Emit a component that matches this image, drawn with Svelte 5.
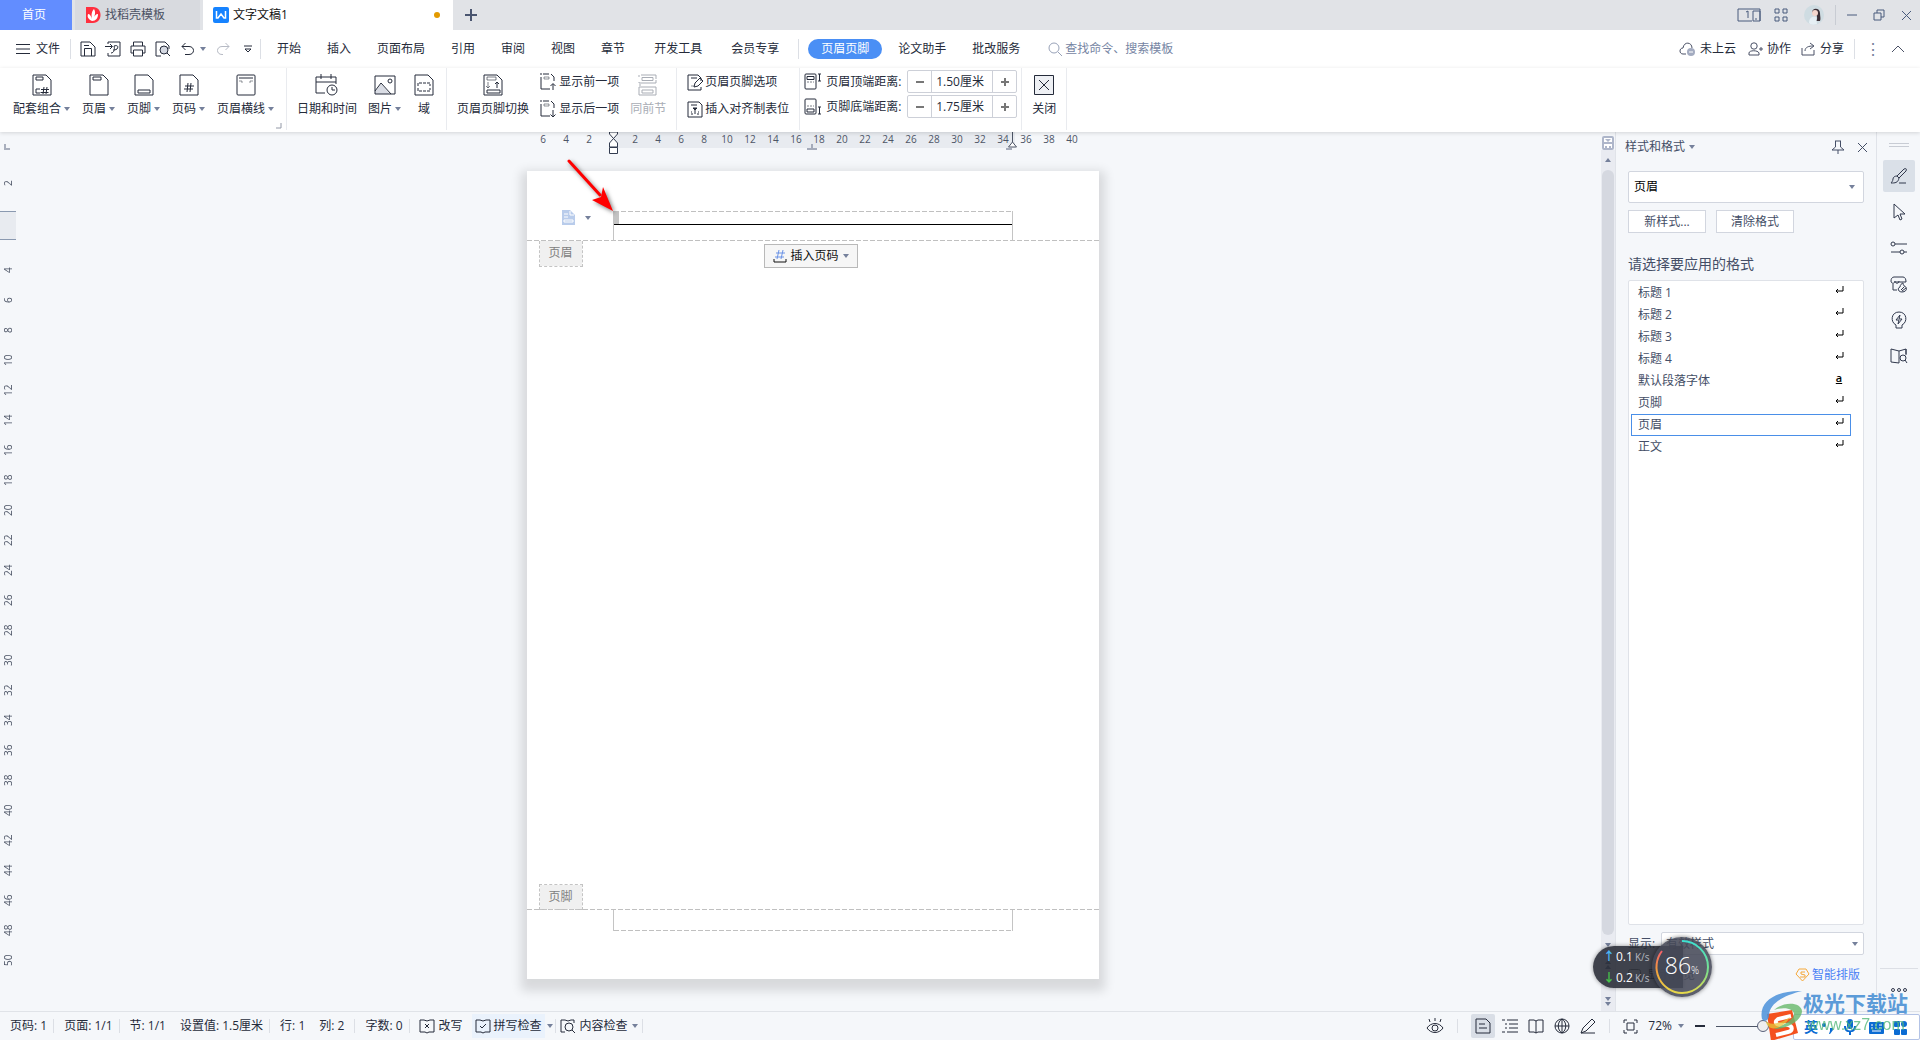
<script>
  const menus = ['开始', '插入', '页面布局', '引用', '审阅', '视图', '章节'];
  const extraMenus = ['开发工具', '会员专享'];
  const quick = [
    { name: 'save', label: '保存' },
    { name: 'export', label: '输出为PDF' },
    { name: 'print', label: '打印' },
    { name: 'preview', label: '打印预览' },
  ];
  const headerTools = [
    { icon: 'combo', label: '配套组合' },
    { icon: 'header', label: '页眉' },
    { icon: 'footer', label: '页脚' },
    { icon: 'number', label: '页码' },
    { icon: 'hline', label: '页眉横线' },
  ];
  const rulerX = [6, 4, 2, 0, ...Array.from({ length: 20 }, (_, i) => (i + 1) * 2)];
  const rulerY = Array.from({ length: 24 }, (_, i) => 4 + i * 2);
  const styles = ['标题 1', '标题 2', '标题 3', '标题 4', '默认段落字体', '页脚', '页眉', '正文'];
  const rail = ['brush', 'cursor', 'sliders', 'shop', 'bulb', 'booksearch'];
  const views = [
    { icon: 'list', label: '大纲' },
    { icon: 'book', label: '阅读版式' },
    { icon: 'globe', label: 'Web版式' },
    { icon: 'pen', label: '写作模式' },
  ];

  let current = $state('页眉');
  let margins = $state([
    { icon: 'topdist', label: '页眉顶端距离:', value: 1.5 },
    { icon: 'botdist', label: '页脚底端距离:', value: 1.75 },
  ]);
  let zoom = $state(47);

  const sheet = (w, h) => `<path d="M1 1h${w - 7}l5 5v${h - 7}H1z"/>`;

  // name: [width, height, markup]
  const icons = {
    caret: [6, 4, '<path d="M0 0h6L3 4z" fill="#75809b" stroke="none"/>'],
    menu: [14, 10, '<path d="M0 .5h14M0 5h14M0 9.500h14"/>'],
    save: [16, 16, '<path d="M1 15V1h9l5 5v9zM4.500 15V7.500h7V15M4 4.500h5"/>'],
    export: [16, 16, '<path d="M3 3V1h12v14H3v-3M0 5.500h7M5 3l2.500 2.500L5 8M6 12c3 0 4-4 3-7 3-1 5 0 3 3-1 1-4 1-4 1"/>'],
    print: [16, 16, '<path d="M3.500 5V1h9v4M3.500 12H1V5h14v7h-2.500M3.500 9h9v6h-9z"/>'],
    preview: [16, 16, '<path d="M6 15H1V1h9l4 4v3"/><circle cx="9" cy="9" r="4" fill="#d5d9e2"/><path d="M12 12l3 3"/>'],
    undo: [14, 14, '<path d="M4.500 1L1 4.500 4.500 8M1 4.500h7c6 0 6 8 0 8H4"/>'],
    redo: [14, 14, '<path d="M9.500 1L13 4.500 9.500 8M13 4.500H6c-6 0-6 8 0 8h1"/>'],
    more: [8, 8, '<path d="M0 1h8M1 4l3 3 3-3z"/>'],
    search: [15, 15, '<circle cx="6" cy="6" r="5"/><path d="M10 10l4 4"/>'],
    cloud: [17, 15, '<path d="M7 12H4C0 12 0 6 4 6c1-7 9-6 9 0"/><circle cx="12" cy="10" r="4" fill="#a3abc0" stroke="none"/><path d="M10 10h4" stroke="#fff"/>'],
    person: [15, 14, '<circle cx="6" cy="4" r="3.200"/><path d="M1 13v-2c0-3 9-3 10 0v2zM11 7h4M13 5v4"/>'],
    share: [15, 14, '<path d="M1 6v7h12V8M4 9c0-4 4-5 8-5M9 1l4 3-4 3"/>'],
    up: [14, 8, '<path d="M1 7l6-6 6 6"/>'],
    monitor: [24, 14, '<path d="M15 13H1V1h22v12M16 13V3h7v10zM18 11h2"/><path d="M9 4l2-1v7"/>'],
    grid: [14, 14, '<path d="M1 1h4v4H1zM9 1h4v4H9zM1 9h4v4H1zM9 9h4v4H9z"/>'],
    minimize: [10, 10, '<path d="M0 5h10"/>'],
    restore: [12, 12, '<path d="M1 4h7v7H1zM4 4V1h7v7H8"/>'],
    close: [11, 11, '<path d="M1 1l9 9M10 1l-9 9"/>'],
    plus: [12, 12, '<path d="M6 0v12M0 6h12" stroke-width="2"/>'],
    combo: [20, 22, sheet(20, 22) + '<path d="M4 3h7v3H4zM8 15H4v4h4M9 15.500h8M8.500 18.500h8M12 13l-1 7M15 13l-1 7"/>'],
    header: [20, 22, sheet(20, 22) + '<path d="M4 3h8v3H4z"/>'],
    footer: [20, 22, sheet(20, 22) + '<path d="M4 16h12v3H4z"/>'],
    number: [20, 22, sheet(20, 22) + '<path d="M6 12h9M5 15h9M9 9l-1 9M12 9l-1 9"/>'],
    hline: [20, 22, '<rect x="1" y="1" width="18" height="20" rx="1"/><path d="M3 4h14"/><path d="M3 7h3v2M17 7h-3v2" opacity=".5"/>'],
    date: [24, 22, '<path d="M10 19H1V3h20v7M1 8h20M6 0v5M16 0v5"/><circle cx="17" cy="16" r="5"/><path d="M17 13v3h3"/>'],
    image: [22, 20, '<path d="M1 17l6-8 9 10H1z" fill="#d9dce4" stroke="none"/><path d="M1 1h20v18H1zM1 16l6-8 10 11"/><circle cx="16" cy="6" r="2"/>'],
    field: [20, 22, sheet(20, 22) + '<path d="M4 12V9h12v3M4 14v3h12v-3" stroke-dasharray="3 1"/>'],
    swap: [20, 22, sheet(20, 22) + '<path d="M4 3h9v3H4z" opacity=".6"/><path d="M4 16h13v3H4z"/><path d="M5 8v6M3 12l2 2 2-2" opacity=".6"/><path d="M14 14V8M12 10l2-2 2 2"/>'],
    prev: [17, 18, '<path d="M1 2V0M3 1h6M1 4v12h9M11 1l3 3v4" /><path d="M4 4h5v2H4z" opacity=".5"/><path d="M13 17v-6M10.500 13l2.500-2.500 2.500 2.500"/>'],
    next: [17, 18, '<path d="M1 2V0M3 1h6M1 4v12h9M11 1l3 3v4" /><path d="M4 4h5v2H4z" opacity=".5"/><path d="M13 10v7M10.500 14.500l2.500 2.500 2.500-2.500"/>'],
    same: [20, 22, '<path d="M1 8v1h17V6M3 1h15v4M4 3.500h11v3H4zM1 1v2M1 21V13h17v8zM4 16h11v3H4zM1 11h2"/>'],
    options: [16, 17, '<path d="M14 7V4l-3-3H1v15h13v-3M4 4h6"/><path d="M4 12h3" opacity=".5"/><path d="M7 13l1-4 5-5 3 3-5 5z"/>'],
    tabstop: [16, 17, '<path d="M1 1h11l3 3v12H1zM4 4h6M4 11h1M4 13h2M11 11h1M10 13h2" /><path d="M6 7h4l-2 2zM8 9v4" fill="currentColor"/>'],
    topdist: [17, 17, '<rect x="1" y="1" width="11" height="15" rx="1"/><path d="M3 3.500h7v3H3z"/><path d="M3 9h7" stroke-dasharray="2 1" opacity=".6"/><path d="M14 1h3M15.500 1v7M14 8h3"/>'],
    botdist: [17, 17, '<rect x="1" y="1" width="11" height="15" rx="1"/><path d="M3 11h7v3H3z"/><path d="M3 8h7" stroke-dasharray="2 1" opacity=".6"/><path d="M14 9h3M15.500 9v7M14 16h3"/>'],
    closebox: [20, 20, '<path d="M.5.5h19v19H.5z" fill="#eef0f4"/><path d="M5 5l10 10M15 5L5 15"/>'],
    minus: [8, 8, '<path d="M0 4h8" stroke-width="2"/>'],
    minus10: [10, 10, '<path d="M0 5h10" stroke-width="2"/>'],
    plus8: [8, 8, '<path d="M0 4h8M4 0v8" stroke-width="2"/>'],
    launcher: [6, 6, '<path d="M5 0v5H0"/>'],
    pin: [14, 14, '<path d="M4 1h6M4.500 1v6L1 10h12L9.500 7V1M7 10v4"/>'],
    brush: [18, 18, '<path d="M7 9l7-7c2-1 3 0 2 2l-7 7M7 9c-2 0-4 1-4 3s-2 4-2 4c4 0 7 0 8-5zM9 16h7"/>'],
    cursor: [14, 18, '<path d="M2 1v14l4-3 2 5 2-1-2-5h5z"/>'],
    sliders: [18, 16, '<circle cx="3" cy="4" r="2"/><path d="M5 4h12M1 12h9M14 12h3"/><circle cx="12" cy="12" r="2"/>'],
    shop: [18, 17, '<path d="M3 8v6h4M4 1h9c2 0 3 2 3 5H6M4 1C2 1 1 3 1 5c0 3 4 3 4 0M5 5c0 3 4 3 4 0"/><path d="M12 16c-4 0-5-4-2-5 0-2 2-4 3-4 0 2 1 2 1 3 4 1 3 6-2 6zM11 14l3-3M12 15l4-3" fill="#f5f7fa"/>'],
    bulb: [16, 18, '<path d="M5 14C-1 11 0 1 8 1s9 10 3 13v3H5zM9 4L5 9h3l-1 4 4-5H8z"/>'],
    booksearch: [18, 16, '<path d="M9 3L1 1v13l8 1M9 15V3l7-2v6M16 1v5"/><circle cx="13" cy="10" r="3"/><path d="M15 12l2 3"/>'],
    gem: [15, 14, '<path d="M4 1h7l3 5-6.500 7L1 6z"/><path d="M10 4H6v2l4 1v2H5"/>'],
    bookx: [16, 16, '<path d="M5 2H1v12h5l2 1 2-1h5V2h-4L8 3zM6 6l4 4M10 6l-4 4"/>'],
    bookok: [16, 16, '<path d="M5 2H1v12h5l2 1 2-1h5V2h-4L8 3zM5 8l2 2 4-4"/>'],
    bookfind: [16, 16, '<path d="M5 2H1v12h4M5 2l3 1 3-1h3v3"/><circle cx="9" cy="9" r="4"/><path d="M12 12l3 3"/>'],
    eye: [18, 16, '<path d="M1 10c4-6 12-6 16 0-4 6-12 6-16 0zM9 3V0M4 4L3 1M14 4l1-3"/><circle cx="9" cy="10" r="3"/>'],
    doc: [16, 16, '<path d="M1 1h10l4 4v10H1zM4 6h6M4 10h8"/>'],
    list: [16, 14, '<path d="M0 1h3M5 1h11M3 5h2M7 5h9M3 9h2M7 9h9M0 13h3M5 13h11"/>'],
    book: [16, 16, '<path d="M1 2h5l2 1 2-1h5v12h-5l-2 1-2-1H1zM8 3v12"/>'],
    globe: [16, 16, '<circle cx="8" cy="8" r="7"/><path d="M1 8h14M8 1v14M8 1C3 4 3 12 8 15M8 1c5 3 5 11 0 14"/>'],
    pen: [16, 16, '<path d="M1 15l2-5 9-9 3 3-9 9-5 2h14"/>'],
    fit: [15, 15, '<path d="M4 1H1v3M11 1h3v3M1 11v3h3M14 11v3h-3M4 4h7v7H4z"/>'],
    enter: [10, 8, '<path d="M9 0v5H2M4 3L2 5l2 2" stroke="#000"/>'],
    paste: [13, 15, '<path d="M0 0h8l5 5v10H0z" fill="#b9cceb" stroke="none"/><path d="M8 1v4h4M2 4h4M2 7h4M2 10h9v2H2z" stroke="#fff"/>'],
    insertno: [14, 13, '<path d="M3 3h9M2 7h9M6 0L4 9M10 0L8 9" stroke="#6b93e6"/><path d="M1 9v3h12V9"/>'],
  };
</script>

{#snippet icon(name)}
  {@const [w, h, body] = icons[name]}
  <svg class="icon" width={w} height={h} viewBox="0 0 {w} {h}" aria-hidden="true">{@html body}</svg>
{/snippet}

<div class="app">
  <header class="tabs">
    <button class="tab home">首页</button>
    <button class="tab docer">
      <svg width="16" height="16" viewBox="0 0 16 16" aria-hidden="true">
        <path d="M1 0h7c10 0 10 16 0 16H1z" fill="#ff2f3f" />
        <path d="M7 14C1 11 3 8 3 7c2 0 3 2 4 5C6 7 7 4 9 2c2 3 1 7-1 10 1-3 3-5 5-5 0 4-2 7-6 7z" fill="#fff" />
      </svg>
      找稻壳模板
    </button>
    <button class="tab doc">
      <svg width="16" height="16" viewBox="0 0 16 16" aria-hidden="true">
        <rect width="16" height="16" rx="2" fill="#1683ff" />
        <path d="M3.500 4v7h1.500l3-4 3 4h1.500V4" fill="none" stroke="#fff" stroke-width="1.500" />
      </svg>
      文字文稿1
      <span class="dirty"></span>
    </button>
    <button class="newtab" aria-label="新建">{@render icon('plus')}</button>
    <div class="window">
      <button aria-label="双屏">{@render icon('monitor')}</button>
      <button aria-label="应用">{@render icon('grid')}</button>
      <svg width="20" height="20" viewBox="0 0 20 20" aria-hidden="true">
        <circle cx="10" cy="10" r="10" fill="#cfdce2" />
        <path d="M8 8c0-6 8-5 8 0 0 3 1 6 0 8h-4c2-2 1-5 0-7" fill="#3a2e35" />
        <circle cx="11" cy="8" r="3" fill="#f3d6cd" />
        <path d="M5 18c0-6 4-7 7-6l1 7c-3 1-6 1-8-1z" fill="#e6eff4" />
      </svg>
      <span class="sep tall"></span>
      <button aria-label="最小化">{@render icon('minimize')}</button>
      <button aria-label="还原">{@render icon('restore')}</button>
      <button aria-label="关闭窗口">{@render icon('close')}</button>
    </div>
  </header>

  <nav class="menubar">
    <button class="file">{@render icon('menu')}文件</button>
    <span class="sep"></span>
    <div class="quick">
      {#each quick as q}
        <button aria-label={q.label}>{@render icon(q.name)}</button>
      {/each}
      <button class="undo" aria-label="撤销">{@render icon('undo')}{@render icon('caret')}</button>
      <button class="faded" aria-label="恢复">{@render icon('redo')}</button>
      <button class="qmore" aria-label="自定义">{@render icon('more')}</button>
    </div>
    <span class="sep"></span>
    <div class="menus main">
      {#each menus as m}<button>{m}</button>{/each}
    </div>
    <div class="menus wide">
      {#each extraMenus as m}<button>{m}</button>{/each}
    </div>
    <span class="sep"></span>
    <div class="menus context">
      <button class="pill">页眉页脚</button>
      <button>论文助手</button>
      <button>批改服务</button>
    </div>
    <label class="search">
      {@render icon('search')}
      <input type="text" placeholder="查找命令、搜索模板" aria-label="查找命令" />
    </label>
    <div class="cloud">
      <button>{@render icon('cloud')}未上云</button>
      <button>{@render icon('person')}协作</button>
      <button>{@render icon('share')}分享</button>
      <span class="sep"></span>
      <button class="dots" aria-label="更多">⋮</button>
      <button aria-label="收起功能区">{@render icon('up')}</button>
    </div>
  </nav>

  <section class="ribbon">
    <div class="group first">
      {#each headerTools as t}
        <button class="big">
          {@render icon(t.icon)}
          <span>{t.label}{@render icon('caret')}</span>
        </button>
      {/each}
      <span class="launcher">{@render icon('launcher')}</span>
    </div>
    <div class="group">
      <button class="big">{@render icon('date')}<span>日期和时间</span></button>
      <button class="big">{@render icon('image')}<span>图片{@render icon('caret')}</span></button>
      <button class="big narrow">{@render icon('field')}<span>域</span></button>
    </div>
    <div class="group">
      <button class="big">{@render icon('swap')}<span>页眉页脚切换</span></button>
      <div class="stack">
        <button>{@render icon('prev')}显示前一项</button>
        <button>{@render icon('next')}显示后一项</button>
      </div>
      <button class="big" disabled>{@render icon('same')}<span>同前节</span></button>
    </div>
    <div class="group">
      <div class="stack options">
        <button>{@render icon('options')}页眉页脚选项</button>
        <button>{@render icon('tabstop')}插入对齐制表位</button>
      </div>
    </div>
    <div class="group distances">
      {#each margins as m, i}
        <div class="distance">
          {@render icon(m.icon)}
          <label for="dist{i}">{m.label}</label>
          <div class="stepper">
            <button aria-label="减小" onclick={() => (m.value -= 0.05)}>{@render icon('minus')}</button>
            <input id="dist{i}" type="text" value="{m.value.toFixed(2)}厘米" />
            <button aria-label="增大" onclick={() => (m.value += 0.05)}>{@render icon('plus8')}</button>
          </div>
        </div>
      {/each}
    </div>
    <div class="group">
      <button class="big">{@render icon('closebox')}<span>关闭</span></button>
    </div>
  </section>

  <main class="work">
    <div class="vruler">
      <i class="corner"></i>
      <span class="before">2</span>
      <i class="band"></i>
      {#each rulerY as n}<span>{n}</span>{/each}
    </div>

    <div class="canvas">
      <div class="hruler">
        {#each rulerX as n, i}
          <span class:active={i > 3 && n < 36} class:origin={n === 0}>{n || ''}</span>
        {/each}
        <svg class="marks" width="552" height="22" viewBox="0 0 552 22" aria-hidden="true">
          <path d="M77.500 0h8v2l-8 9v4h8v-4l-8-9zM77.500 15.500h8v6h-8z" fill="#fff" stroke="#333c50" />
          <path d="M480.500 0v10l-4 5h8l-4-5" fill="#fff" stroke="#4d5566" />
          <path d="M275 17h10M280 12v5M474 17h6" stroke="#a5abba" stroke-width="2" />
        </svg>
      </div>

      <article class="sheet">
        <div class="head">
          <div class="paste">{@render icon('paste')}{@render icon('caret')}</div>
          <div class="headtext"><i></i></div>
        </div>
        <div class="body">
          <span class="tag">页眉</span>
          <button class="insert">{@render icon('insertno')}插入页码{@render icon('caret')}</button>
          <span class="tag foot">页脚</span>
        </div>
        <div class="footbox"></div>
        <svg class="arrow" width="60" height="66" viewBox="0 0 60 66" aria-hidden="true">
          <path d="M5 4L36 38" stroke="#f00" stroke-width="3" stroke-linecap="round" />
          <path d="M49 54L28 43l9-3 2-10z" fill="#f00" />
        </svg>
      </article>
    </div>

    <div class="scroll">
      <svg width="12" height="14" viewBox="0 0 12 14" aria-hidden="true">
        <rect x="1" y="1" width="10" height="12" rx="1" fill="#fff" stroke="#aeb6ca" stroke-width="2" />
        <path d="M1 7h10M4 10v3M8 10v3" stroke="#aeb6ca" stroke-width="2" />
        <path d="M3 3h6L6 6z" fill="#aeb6ca" />
      </svg>
      <div class="track">
        <span class="flip">{@render icon('caret')}</span>
        <i class="thumb"></i>
        <span>{@render icon('caret')}</span>
        <span class="double flip">{@render icon('caret')}{@render icon('caret')}</span>
        <span class="double last">{@render icon('caret')}{@render icon('caret')}</span>
      </div>
    </div>

    <aside class="panel">
      <div class="ptitle">
        <button>样式和格式{@render icon('caret')}</button>
        <button class="pin" aria-label="固定">{@render icon('pin')}</button>
        <button aria-label="关闭面板">{@render icon('close')}</button>
      </div>
      <div class="pick">
        <select aria-label="当前样式" bind:value={current}>
          {#each styles as s}<option>{s}</option>{/each}
        </select>
        {@render icon('caret')}
      </div>
      <div class="actions">
        <button>新样式...</button>
        <button>清除格式</button>
      </div>
      <h2>请选择要应用的格式</h2>
      <ul>
        {#each styles as s}
          <li class:selected={s === current}>
            <button onclick={() => (current = s)}>
              {s}
              <span class="kind">
                {#if s === '默认段落字体'}<u>a</u>{:else}{@render icon('enter')}{/if}
              </span>
            </button>
          </li>
        {/each}
      </ul>
      <div class="show">
        <label for="filter">显示:</label>
        <div class="pick small">
          <select id="filter"><option>有效样式</option></select>
          {@render icon('caret')}
        </div>
      </div>
      <div class="bottom">
        <label><input type="checkbox" />显示预览</label>
        <a href="#layout">{@render icon('gem')}智能排版</a>
      </div>
    </aside>

    <div class="rail">
      <i class="grip"></i>
      {#each rail as r, i}
        <button class:on={i === 0} aria-label={r}>{@render icon(r)}</button>
      {/each}
      <button class="ellipsis" aria-label="更多工具"><i></i><i></i><i></i></button>
    </div>
  </main>

  <footer class="status">
    <span>页码: 1</span><i class="sep"></i>
    <span>页面: 1/1</span><i class="sep"></i>
    <span>节: 1/1</span>
    <span class="plain">设置值: 1.5厘米</span><i class="sep"></i>
    <span>行: 1</span>
    <span class="plain column">列: 2</span><i class="sep"></i>
    <span>字数: 0</span><i class="sep"></i>
    <button>{@render icon('bookx')}改写</button>
    <button class="spell">{@render icon('bookok')}拼写检查</button>
    {@render icon('caret')}
    <i class="sep"></i>
    <button class="check">{@render icon('bookfind')}内容检查{@render icon('caret')}</button>
    <i class="sep"></i>

    <div class="views">
      <button aria-label="护眼模式">{@render icon('eye')}</button>
      <i class="sep"></i>
      <button class="on" aria-label="页面视图">{@render icon('doc')}</button>
      {#each views as v}<button aria-label={v.label}>{@render icon(v.icon)}</button>{/each}
      <i class="sep"></i>
      <button aria-label="最佳显示比例">{@render icon('fit')}</button>
      <button class="percent">72%{@render icon('caret')}</button>
      <button class="out" aria-label="缩小">{@render icon('minus10')}</button>
      <input type="range" min="0" max="100" bind:value={zoom} aria-label="缩放" />
    </div>
  </footer>

  <div class="net">
    <div class="rates">
      <p><b class="upload">↑</b>0.1<small>K/s</small></p>
      <p><b class="download">↓</b>0.2<small>K/s</small></p>
    </div>
    <div class="gauge">
      <svg width="60" height="60" viewBox="0 0 60 60" aria-hidden="true">
        <defs>
          <linearGradient id="g1" x1="0" y1="0" x2="0" y2="1">
            <stop offset="0" stop-color="#3de0d0" /><stop offset=".6" stop-color="#7fe08a" /><stop offset="1" stop-color="#e6d94a" />
          </linearGradient>
          <linearGradient id="g2" x1="0" y1="0" x2="0" y2="1">
            <stop offset="0" stop-color="#f2606a" /><stop offset=".5" stop-color="#f2a23a" /><stop offset="1" stop-color="#e6d94a" />
          </linearGradient>
        </defs>
        <path d="M30 4a26 26 0 0 1 0 52" fill="none" stroke="url(#g1)" stroke-width="2" />
        <path d="M30 56A26 26 0 0 1 10 14" fill="none" stroke="url(#g2)" stroke-width="2" />
      </svg>
      <span>86<small>%</small></span>
    </div>
  </div>

  <div class="ime">
    <b>英</b>
    <svg width="100" height="18" viewBox="0 0 100 18" aria-hidden="true">
      <g fill="#0b6bd3">
        <circle cx="6" cy="7" r="2" /><path d="M12 10h3v2l-3 4h-1l1-3z" />
        <rect x="29" y="1" width="6" height="10" rx="3" />
        <path d="M26 8h2c0 6 8 6 8 0h2c0 4-2 6-5 6v3h-2v-3c-3 0-5-2-5-6z" />
        <rect x="51" y="4" width="15" height="12" rx="1" />
        <rect x="76" y="3" width="6" height="6" rx="1" /><circle cx="86" cy="6" r="3" />
        <rect x="76" y="11" width="6" height="6" rx="1" /><rect x="83" y="11" width="6" height="6" rx="1" />
      </g>
      <path d="M53 7h2M57 7h2M61 7h3M53 10h2M57 10h2M61 10h3M54 13h9" stroke="#fff" />
    </svg>
  </div>

  <div class="mark">
    <svg width="48" height="50" viewBox="0 0 48 50" aria-hidden="true">
      <path d="M7 24l25-4 6 23-27 8z" fill="#f4511e" />
      <path d="M31 26l-13 3c-4 3-2 6 3 6h7c5 1 5 6 0 7l-12 3" fill="none" stroke="#fff" stroke-width="4" />
      <path d="M2 29C-2 11 18 0 42 1 26 5 10 12 9 25c0 5-4 8-7 4z" fill="#4a90d9" opacity=".85" />
      <path d="M14 20c10-9 27-8 28 1 0 9-14 18-28 18 12-5 20-10 20-15s-9-8-20-4z" fill="#66b86a" opacity=".8" />
      <path d="M6 31c4 5 14 3 24-4-4 8-14 13-19 11-3-1-5-4-5-7z" fill="#e8c53a" opacity=".75" />
    </svg>
    <p><strong>极光下载站</strong><em>www.xz7.com</em></p>
  </div>
</div>

<style>
  :global(body) { margin: 0; }
  .app {
    position: relative;
    display: flex;
    flex-direction: column;
    min-height: 100vh;
    overflow: hidden;
    background: #f5f7fa;
    color: #252b3a;
    font: 12px/16px "Open Sans", "Noto Sans CJK SC", sans-serif;
  }
  .app * { box-sizing: border-box; }
  button, input, select {
    margin: 0;
    padding: 0;
    border: 0;
    background: none;
    color: inherit;
    font: inherit;
    white-space: nowrap;
  }
  button { display: flex; align-items: center; }
  p, h2, ul { margin: 0; padding: 0; }
  .icon { flex: none; fill: none; stroke: currentColor; }
  .sep { width: 1px; height: 20px; flex: none; background: #dcdfe5; }

  .tabs { display: flex; height: 30px; background: #e1e3e7; }
  .tab { gap: 4px; }
  .home { width: 72px; padding-left: 22px; background: #628dff; color: #fff; }
  .docer { width: 125px; margin-left: 3px; padding-left: 10px; background: #d8dadf; color: #4b5163; }
  .doc { width: 250px; margin-left: 3px; padding: 0 13px 0 10px; background: #fff; color: #111; }
  .dirty { width: 6px; height: 6px; margin-left: auto; border-radius: 50%; background: #e39a00; }
  .newtab { padding: 0 12px; color: #4a5570; }
  .window { display: flex; align-items: center; gap: 16px; margin-left: auto; padding-right: 8px; color: #485b7d; }
  .window svg { display: block; }
  .window .tall { margin: 0 -5px; background: #c8ccd3; }
  .window button:first-child { margin-right: -3px; }

  .menubar { display: flex; align-items: center; height: 38px; background: #fff; }
  .file { gap: 6px; padding: 0 10px 0 16px; }
  .quick { display: flex; align-items: center; gap: 9px; width: 189px; padding-left: 9px; }
  .undo { gap: 5px; margin-left: 1px; }
  .quick .faded { margin-left: 1px; color: #b6bac4; }
  .qmore { margin-left: 5px; }
  .menus { display: flex; padding-left: 3px; }
  .menus button { height: 20px; padding: 0 13px; }
  .menus.wide { gap: 3px; padding-right: 6px; }
  .menus.context { padding-left: 9px; }
  .menus .pill { margin-right: 3px; border-radius: 10px; background: #4a8ff5; color: #fff; }
  .search { display: flex; align-items: center; gap: 2px; margin-left: 15px; color: #98a2b8; }
  .search input { width: 160px; outline: 0; }
  .search input::placeholder { color: #7685a3; opacity: 1; }
  .cloud { display: flex; align-items: center; gap: 10px; margin-left: auto; padding-right: 15px; }
  .cloud button { gap: 4px; }
  .cloud button:first-child { margin-right: 2px; }
  .cloud .icon { color: #4a5166; }
  .cloud .dots { width: 16px; justify-content: center; color: #75809b; font-size: 16px; }

  .ribbon {
    position: relative;
    display: flex;
    height: 64px;
    background: #fff;
    box-shadow: 0 1px 4px rgba(0, 0, 0, 0.14);
    z-index: 1;
  }
  .group { display: flex; align-items: flex-start; gap: 11px; height: 62px; padding: 0 10px; border-right: 1px solid #e9ebef; }
  .first { position: relative; gap: 12px; padding: 0 12px 0 13px; }
  .launcher { position: absolute; right: 4px; bottom: 1px; display: flex; color: #9298a6; }
  .big { flex-direction: column; justify-content: space-between; height: 49px; padding-top: 6px; }
  .big span { display: flex; align-items: center; gap: 3px; }
  .big > .icon { height: 22px; }
  .big:disabled { color: #a9adb5; }
  .narrow { min-width: 24px; }
  .stack { display: flex; flex-direction: column; gap: 7px; padding-top: 4px; }
  .stack button { gap: 2px; height: 20px; }
  .distances { flex-direction: column; gap: 2px; padding: 2px 4px 0; }
  .distance { display: flex; align-items: center; gap: 5px; }
  .distance label { width: 76px; }
  .stepper { display: flex; width: 110px; height: 23px; border: 1px solid #cdd0d8; border-radius: 2px; color: #252b3a; }
  .stepper button { width: 23px; justify-content: center; color: #777; }
  .stepper input { width: 62px; padding-left: 4px; border: solid #cdd0d8; border-width: 0 1px; outline: 0; }

  .work { display: flex; flex: 1; min-height: 0; }
  .vruler { width: 16px; flex: none; display: flex; flex-direction: column; color: #4d5566; font-size: 10px; }
  .vruler span { display: flex; align-items: center; justify-content: center; width: 16px; height: 30px; writing-mode: vertical-rl; transform: rotate(180deg); }
  .corner { width: 6px; height: 6px; margin: 12px 0 18px 4px; border: solid #a9afbd; border-width: 0 0 2px 2px; }
  .band { height: 29px; margin: 13px 0 15px; border: solid #8a99b0; border-width: 1px 0; background: #e8ebf0; }
  .canvas { display: flex; flex: 1; flex-direction: column; align-items: center; padding-left: 8px; }
  .hruler { position: relative; display: flex; width: 572px; height: 39px; padding-left: 5px; color: #4d5566; font-size: 10px; }
  .hruler span { width: 23px; height: 16px; text-align: center; line-height: 15px; }
  .hruler .active { background: #e8ebf0; }
  .hruler .origin { background: linear-gradient(90deg, transparent 50%, #e8ebf0 50%); }
  .marks { position: absolute; top: 0; left: 5px; }

  .sheet {
    --dash: repeating-linear-gradient(90deg, #c0c0c0 0 5px, transparent 5px 7px);
    position: relative;
    width: 572px;
    height: 808px;
    display: flex;
    flex-direction: column;
    background: #fff;
    box-shadow: 0 6px 10px 6px rgba(0, 0, 0, 0.12);
  }
  .head { display: flex; height: 70px; padding-top: 40px; background: var(--dash) bottom / 100% 1px no-repeat; }
  .paste { display: flex; align-items: center; gap: 10px; width: 86px; height: 13px; padding-left: 35px; }
  .headtext { width: 400px; border: solid #c4c4c4; border-width: 0 1px; background: var(--dash) top / 100% 1px no-repeat; }
  .headtext i { display: block; height: 14px; background: linear-gradient(#c4c4c4, #c4c4c4) left / 5px 100% no-repeat; border-bottom: 1px solid #000; }
  .body { display: flex; flex: 1; flex-wrap: wrap; align-items: flex-start; align-content: space-between; padding-left: 12px; background: var(--dash) bottom / 100% 1px no-repeat; }
  .tag { width: 44px; height: 26px; padding: 4px 9px; border: 1px dashed #c4c4c4; border-top: 0; background: #f0f0f0; background-clip: padding-box; color: #808080; line-height: 16px; }
  .foot { flex: none; margin-right: 400px; border-top: 1px dashed #c4c4c4; }
  .insert { gap: 4px; height: 24px; margin: 3px 0 0 181px; padding: 0 8px; border: 1px solid #b9b9b9; background: #f6f6f6; color: #111; }
  .footbox { width: 400px; height: 21px; margin: 0 0 48px 86px; border: solid #c4c4c4; border-width: 0 1px; background: var(--dash) bottom / 100% 1px no-repeat; }
  .arrow { position: absolute; top: -14px; left: 37px; filter: drop-shadow(2px 2px 2px rgba(0, 0, 0, 0.5)); }

  .scroll { display: flex; flex: none; flex-direction: column; align-items: center; width: 15px; padding-top: 4px; border-right: 1px solid #e0e3e9; }
  .track { display: flex; flex: 1; flex-direction: column; align-items: center; width: 14px; background: #e9ebf1; }
  .track span { display: flex; flex-direction: column; height: 20px; justify-content: center; }
  .track .flip { transform: scaleY(-1); }
  .thumb { flex: 1; width: 12px; border-radius: 6px; background: #d5d8e0; }
  .double { gap: 1px; }
  .track .last { margin-top: 16px; }

  .panel { display: flex; flex: none; flex-direction: column; width: 261px; padding: 0 12px; border-right: 1px solid #e0e3e9; color: #444e66; }
  .ptitle { display: flex; align-items: center; height: 30px; margin: 0 -4px 0 -3px; }
  .ptitle button { gap: 4px; }
  .ptitle .pin { margin: 0 12px 0 auto; }
  .pick { position: relative; display: flex; align-items: center; height: 32px; margin-top: 9px; }
  .pick select { width: 100%; height: 100%; padding: 0 5px; border: 1px solid #d2d6df; border-radius: 2px; background: #fff; color: #000; appearance: none; }
  .pick .icon { position: absolute; right: 9px; }
  .actions { display: flex; gap: 10px; margin-top: 7px; }
  .actions button { width: 78px; height: 23px; justify-content: center; border: 1px solid #d2d6df; background: #fff; }
  h2 { margin-top: 21px; font-size: 14px; font-weight: 400; line-height: 20px; }
  ul { flex: 1; margin-top: 6px; padding: 1px 12px 0 2px; border: 1px solid #dfe2e8; border-radius: 2px; background: #fff; list-style: none; }
  li { height: 22px; border: 1px solid transparent; }
  .selected { border-color: #4a8fe8; }
  li button { justify-content: space-between; width: 100%; height: 20px; padding: 0 5px 0 6px; }
  .kind { display: flex; align-items: center; justify-content: center; width: 12px; height: 14px; margin-bottom: 6px; }
  u { color: #000; font-weight: 600; font-size: 11px; }
  .show { display: flex; align-items: center; gap: 6px; margin-top: 7px; }
  .show label { width: 27px; white-space: nowrap; }
  .small { flex: 1; height: 23px; margin: 0; }
  .small select { padding: 0 4px; color: #444e66; }
  .small .icon { right: 6px; }
  .bottom { display: flex; align-items: center; justify-content: space-between; height: 56px; padding: 0 4px 16px 0; }
  .bottom label { display: flex; align-items: center; gap: 6px; }
  .bottom input { width: 13px; height: 13px; }
  a { display: flex; align-items: center; gap: 2px; color: #4a7ff5; text-decoration: none; }
  a .icon { color: #f5a93a; }

  .rail { display: flex; flex: none; flex-direction: column; align-items: center; gap: 4px; width: 43px; padding-top: 11px; color: #30384c; }
  .grip { width: 20px; height: 4px; margin-bottom: 9px; border: solid #c8ccd4; border-width: 1px 0; }
  .rail button { width: 32px; height: 32px; justify-content: center; }
  .rail .on { border-radius: 2px; background: #dae0e8; }
  .rail .ellipsis { gap: 2px; width: 38px; height: 43px; margin-top: auto; border-top: 1px solid #dcdfe5; }
  .ellipsis i { width: 4px; height: 4px; border: 1px solid #30384c; border-radius: 50%; }

  .status { display: flex; align-items: center; height: 29px; border-top: 1px solid #e0e3e8; }
  .status .sep { height: 14px; }
  .status > span { padding: 0 6px 0 10px; }
  .status > .plain { padding: 0 6px 0 8px; }
  .status > .column { padding-right: 10px; }
  .status > button { gap: 4px; height: 24px; padding: 0 9px; }
  .status > .spell { gap: 3px; margin-right: 2px; padding: 0 3px; background: #eaf2fc; }
  .spell + .icon { margin-right: 2px; }
  .status > .check { padding: 0 4px; }
  .views { display: flex; align-items: center; gap: 10px; margin-left: auto; padding-right: 104px; }
  .views .sep { margin: 0 3px; }
  .views .on { width: 24px; height: 24px; margin-right: -3px; justify-content: center; border-radius: 2px; background: #d9dee6; }
  .percent { gap: 6px; }
  .views .out { margin: 0 1px; }
  .views input { width: 100px; height: 14px; appearance: none; background: linear-gradient(#4d5566, #4d5566) center / 100% 1px no-repeat; }
  .views input::-webkit-slider-thumb { width: 12px; height: 12px; border: 1px solid #59617a; border-radius: 50%; appearance: none; background: #eee; }

  .net { position: absolute; right: 208px; bottom: 43px; display: flex; align-items: center; color: #fff; }
  .rates { width: 90px; height: 42px; margin-right: -31px; padding: 0 0 0 10px; border-radius: 21px 0 0 21px; background: rgba(38, 41, 51, 0.88); line-height: 20px; box-shadow: 0 0 4px rgba(0, 0, 0, 0.4); }
  .rates p { display: flex; align-items: center; height: 21px; font-size: 12px; }
  .rates b { width: 13px; }
  .rates small { margin-left: 2px; color: #b5b8c0; font-size: 10px; }
  .upload { color: #4ab5f5; }
  .download { color: #46c24a; }
  .gauge { position: relative; display: flex; align-items: center; justify-content: center; width: 60px; height: 60px; border-radius: 50%; background: rgba(70, 73, 88, 0.88); box-shadow: 0 0 4px rgba(0, 0, 0, 0.5); }
  .gauge svg { position: absolute; }
  .gauge span { font: 23px/28px "Open Sans", sans-serif; font-weight: 300; }
  .gauge small { font-size: 10px; }

  .ime { position: absolute; right: 0; bottom: 0; display: flex; align-items: center; width: 127px; height: 26px; padding-left: 10px; border: 1px solid #b3c3e6; border-radius: 2px; background: #fff; color: #0b6bd3; font-size: 14px; }
  .mark { position: absolute; right: 0; bottom: 0; display: flex; align-items: flex-end; width: 160px; pointer-events: none; }
  .mark svg { flex: none; }
  .mark p { display: flex; flex-direction: column; margin-left: -5px; padding-bottom: 6px; white-space: nowrap; }
  .mark strong { color: #5c9bd8; font-size: 21px; line-height: 26px; }
  .mark em { margin-left: 4px; color: #55b87a; font: 16px/18px "Liberation Sans", sans-serif; opacity: 0.8; }
</style>
